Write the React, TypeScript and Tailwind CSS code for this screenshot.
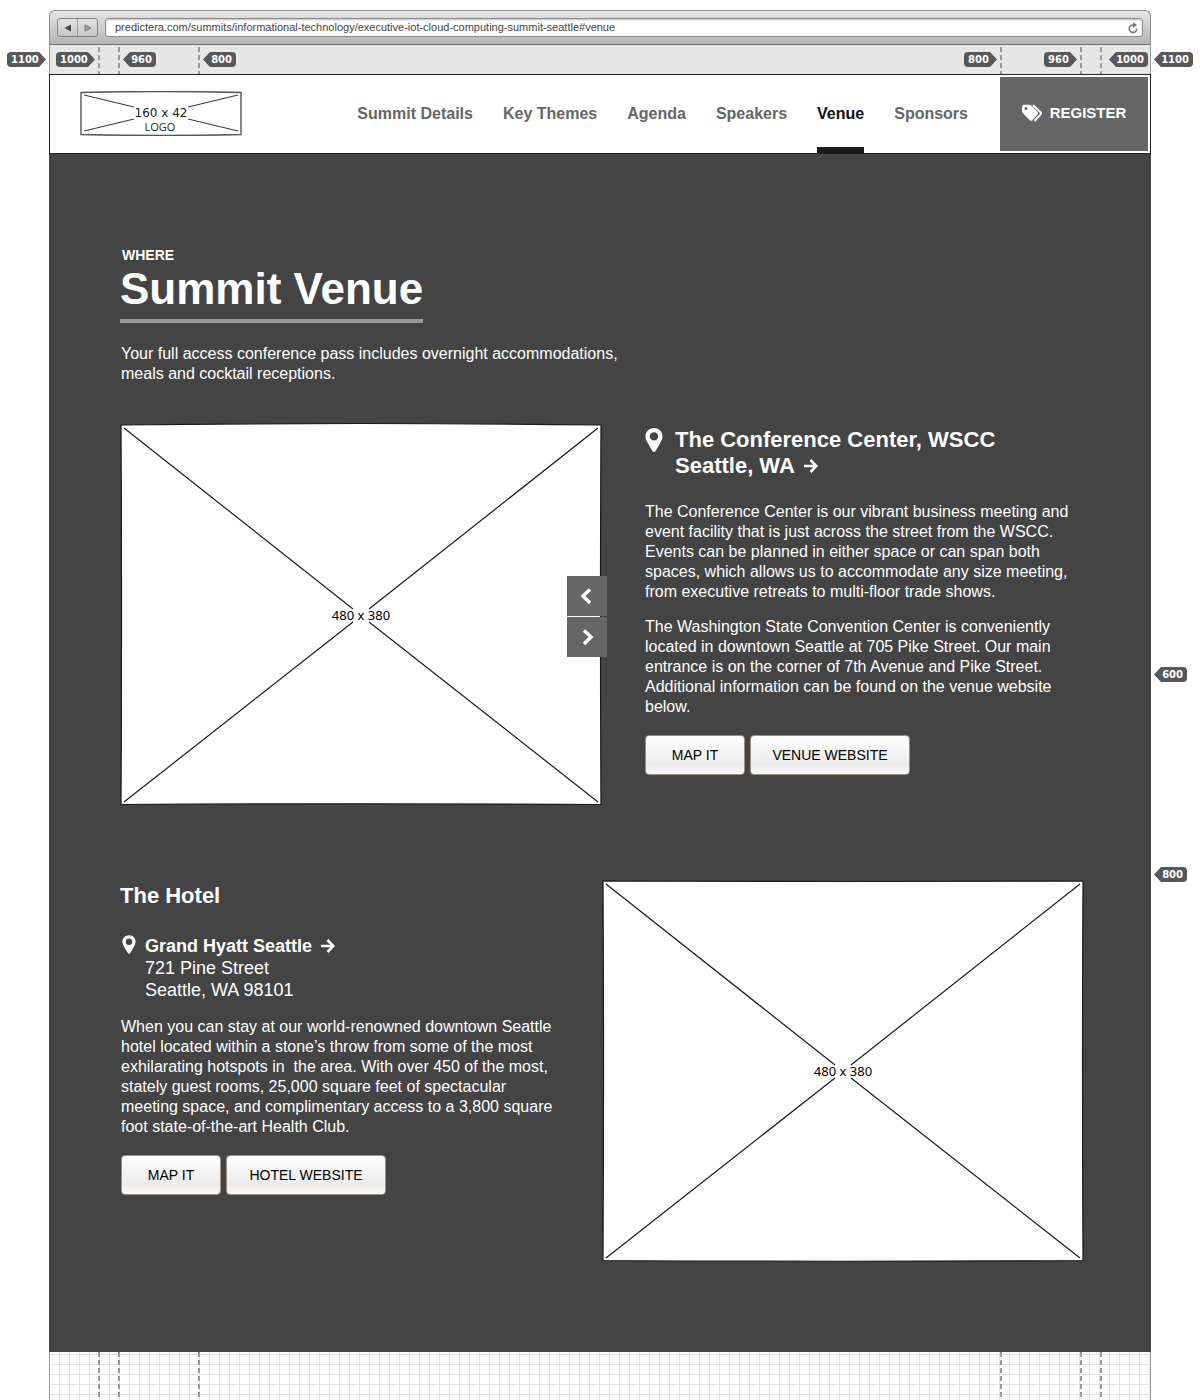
import type { ReactNode } from "react";

function Tag({ label, dir, className = "" }: { label: string; dir: "left" | "right"; className?: string }) {
  return (
    <span
      className={`flex h-[15px] shrink-0 items-center rounded-sm bg-[#58585a] font-['DejaVu_Sans'] text-[10px] leading-none font-bold text-white ${
        dir === "right"
          ? "pr-2.5 pl-1 [clip-path:polygon(0_0,calc(100%-7px)_0,100%_50%,calc(100%-7px)_100%,0_100%)]"
          : "justify-end pr-1 pl-2.5 [clip-path:polygon(7px_0,100%_0,100%_100%,7px_100%,0_50%)]"
      } ${label.length > 3 ? "w-[39px]" : "w-[33px]"} ${className}`}
    >
      {label}
    </span>
  );
}

function Guide({ className = "" }: { className?: string }) {
  return (
    <i
      className={`w-0.5 shrink-0 self-stretch bg-[repeating-linear-gradient(to_bottom,#999_0_5px,transparent_5px_8px)] ${className}`}
    />
  );
}

function Placeholder({ outline, children }: { outline: string; children?: ReactNode }) {
  return (
    <div className="relative w-[482px] max-w-full shrink-0">
      <svg
        viewBox="0 0 482 382"
        className="block w-full overflow-visible"
        fill="none"
        stroke="#1a1a1a"
        strokeWidth="1.2"
      >
        <path d={outline} fill="#fff" />
        <path d="M4 5L233 186M249 199L478 379M478 5L249 186M233 199L4 379" />
        <text
          x="241"
          y="197"
          textAnchor="middle"
          className="fill-black stroke-none font-['Noto_Sans',sans-serif] text-[13px]"
        >
          480 x 380
        </text>
      </svg>
      {children}
    </div>
  );
}

function Pin({ className }: { className: string }) {
  return (
    <svg viewBox="0 0 18 24" className={className} fill="#fff" aria-hidden="true">
      <path
        fillRule="evenodd"
        d="M9 0C4 0 .5 3.7.5 8.3c0 2.4.9 4.2 2 6.200L7.400 23c.7 1.200 2.500 1.200 3.200 0l4.900-8.500c1.100-2 2-3.800 2-6.200C17.500 3.700 14 0 9 0zM9 4.200a4.200 4.200 0 1 1 0 8.400a4.200 4.200 0 0 1 0-8.400z"
      />
    </svg>
  );
}

function Arrow() {
  return (
    <svg viewBox="0 0 14 14" className="size-3.5" fill="none" stroke="#fff" strokeWidth="2.600" aria-hidden="true">
      <path d="M0 7H12M6.500 1L12.300 7L6.500 13" />
    </svg>
  );
}

function Chevron({ d }: { d: string }) {
  return (
    <svg viewBox="0 0 40 40" className="size-10" fill="none" stroke="#fff" strokeWidth="3.500" aria-hidden="true">
      <path d={d} />
    </svg>
  );
}

function LinkButton({ children, wide }: { children: ReactNode; wide?: boolean }) {
  return (
    <button
      type="button"
      className={`h-10 rounded-[4px] border border-[#9c9184] bg-linear-to-b from-white via-[#ebebeb] via-75% to-[#fafafa] text-sm text-black ${
        wide ? "w-40" : "w-[100px]"
      }`}
    >
      {children}
    </button>
  );
}

const links = ["Summit Details", "Key Themes", "Agenda", "Speakers", "Venue", "Sponsors"];

export default function App() {
  return (
    <div className="grid min-h-screen grid-cols-[49px_1fr_49px] bg-white font-['Liberation_Sans',Arial,sans-serif]">
      <aside className="flex flex-col items-end pt-[52px] pr-[3px]">
        <Tag label="1100" dir="right" />
      </aside>

      <div className="flex flex-col pt-2.5">
        <div className="flex h-[35px] items-center gap-[7px] rounded-t-md border border-[#8f8f8f] border-b-[#6f6f6f] bg-linear-to-b from-[#e6e6e6] to-[#b4b4b4] px-[7px]">
          <div className="flex h-[19px] w-[41px] shrink-0 rounded-[3px] border border-[#858585] bg-linear-to-b from-[#e2e2e2] to-[#c6c6c6]">
            <button type="button" aria-label="Back" className="flex flex-1 items-center justify-center border-r border-[#999]">
              <svg viewBox="0 0 8 8" className="size-2">
                <path d="M7 .5V7.500L.5 4Z" fill="#444" />
              </svg>
            </button>
            <button type="button" aria-label="Forward" className="flex flex-1 items-center justify-center">
              <svg viewBox="0 0 8 8" className="size-2">
                <path d="M1 .8V7.200L7 4Z" fill="#999" stroke="#777" strokeWidth=".8" />
              </svg>
            </button>
          </div>
          <div className="flex h-[19px] flex-1 items-center rounded-[3px] border border-[#8b8b8b] bg-white pr-1 pl-[9px] shadow-[inset_0_1px_2px_#bbb]">
            <input
              aria-label="Address"
              readOnly
              value="predictera.com/summits/informational-technology/executive-iot-cloud-computing-summit-seattle#venue"
              className="min-w-0 flex-1 bg-transparent text-[11px] text-[#444] outline-none"
            />
            <button type="button" aria-label="Reload">
              <svg viewBox="0 0 10 12" className="h-3 w-2.5" fill="none" stroke="#777" strokeWidth="1.700">
                <path d="M6 3H5A3.700 3.700 0 1 0 8.700 6.700" />
                <path d="M5 0L9 3L5 6Z" fill="#777" stroke="none" />
              </svg>
            </button>
          </div>
        </div>

        <div className="flex h-[29px] justify-between border-x border-[#999] bg-[#e7e7e7] pt-0.5">
          <div className="flex pl-1.5">
            <Tag label="1000" dir="right" className="mt-[5px]" />
            <Guide className="ml-[3px]" />
            <Guide className="ml-[18px]" />
            <Tag label="960" dir="left" className="mt-[5px] ml-[3px]" />
            <Guide className="ml-[42px]" />
            <Tag label="800" dir="left" className="mt-[5px] ml-[3px]" />
          </div>
          <div className="flex pr-0.5">
            <Tag label="800" dir="right" className="mt-[5px]" />
            <Guide className="ml-[3px]" />
            <Tag label="960" dir="right" className="mt-[5px] ml-[42px]" />
            <Guide className="ml-[3px]" />
            <Guide className="ml-[18px]" />
            <Tag label="1000" dir="left" className="mt-[5px] ml-[7px]" />
          </div>
        </div>

        <header className="flex h-20 border border-[#222] bg-white">
          <a href="#top" aria-label="Logo" className="mt-4 ml-[30px] block w-[162px]">
            <svg viewBox="0 0 162 45" className="w-full" fill="none" stroke="#333">
              <path d="M1 1.500Q81-.5 161 1.500V43.500Q81 45.500 1 43.500Z" stroke="#555" strokeWidth="1.400" />
              <path d="M4 4L54 16M158 4L108 16M4 40L54 28M158 40L108 28" />
              <g textAnchor="middle" className="fill-[#222] stroke-none">
                <text x="81" y="26" className="font-['DejaVu_Sans',sans-serif] text-[12px]">
                  160 x 42
                </text>
                <text x="80" y="40" className="font-['Open_Sans',sans-serif] text-[11px]">
                  LOGO
                </text>
              </g>
            </svg>
          </a>
          <nav className="ml-auto flex gap-[30px] pr-8">
            {links.map((l) => (
              <a
                key={l}
                href={`#${l}`}
                className={`flex h-[78px] items-center border-t-[6px] border-b-[6px] border-t-transparent text-base font-bold ${
                  l === "Venue" ? "border-b-[#1b1b1b] text-[#111]" : "border-b-transparent text-[#666]"
                }`}
              >
                {l}
              </a>
            ))}
          </nav>
          <button
            type="button"
            className="mt-0.5 mr-0.5 flex h-[74px] w-[148px] items-center justify-center gap-[7px] bg-[#666] pb-0.5 text-[15px] font-bold text-white"
          >
            <svg viewBox="0 0 21 18" className="h-[18px] w-[21px]" aria-hidden="true">
              <path
                fillRule="evenodd"
                fill="#fff"
                d="M0 2.500Q0 .8 1.800.8H7.500Q8.500.8 9.300 1.600L15.500 8Q16.600 9.200 15.500 10.400L10.200 16.200Q9 17.400 7.800 16.200L1 9.300Q0 8.400 0 7.200ZM4 3A1.500 1.500 0 1 0 4 6A1.500 1.500 0 1 0 4 3Z"
              />
              <path d="M11 1.200L18.500 8.200Q19.600 9.300 18.500 10.400L12.500 17" fill="none" stroke="#fff" strokeWidth="2" />
            </svg>
            REGISTER
          </button>
        </header>

        <main className="bg-[#444] pt-[93px] pr-[67px] pb-[91px] pl-[71px] text-base leading-5 text-white">
          <p className="pl-0.5 text-sm leading-4 font-bold">WHERE</p>
          <h1 className="w-fit border-b-4 border-[#999] pt-px pb-[5px] text-[44px] leading-[50px] font-bold">
            Summit Venue
          </h1>
          <p className="mt-[21px] max-w-[520px] pl-px">
            Your full access conference pass includes overnight accommodations, meals and cocktail receptions.
          </p>

          <section className="mt-[39px] flex items-start gap-[43px]">
            <Placeholder outline="M1 2Q241-1 481 2Q480 191 481 381.500Q241 380 1 381.500Q2 191 1 2Z">
              <div className="absolute top-[153px] right-[-5px] flex flex-col gap-px">
                <button type="button" aria-label="Previous" className="bg-[#666]">
                  <Chevron d="M23 13.500L16 20L23 27" />
                </button>
                <button type="button" aria-label="Next" className="bg-[#666]">
                  <Chevron d="M17 13.500L24 20L17 27" />
                </button>
              </div>
            </Placeholder>
            <div className="max-w-[430px]">
              <div className="mt-1 flex gap-3">
                <Pin className="mt-px h-6 w-[18px] shrink-0" />
                <h2 className="text-[22px] leading-[26px] font-bold">
                  The Conference Center, WSCC
                  <span className="flex items-center gap-[9px]">
                    Seattle, WA <Arrow />
                  </span>
                </h2>
              </div>
              <p className="mt-[23px]">
                The Conference Center is our vibrant business meeting and event facility that is just across the street
                from the WSCC. Events can be planned in either space or can span both spaces, which allows us to
                accommodate any size meeting, from executive retreats to multi-floor trade shows.
              </p>
              <p className="mt-[15px]">
                The Washington State Convention Center is conveniently located in downtown Seattle at 705 Pike Street.
                Our main entrance is on the corner of 7th Avenue and Pike Street. Additional information can be found on
                the venue website below.
              </p>
              <div className="mt-[18px] flex gap-[5px]">
                <LinkButton>MAP IT</LinkButton>
                <LinkButton wide>VENUE WEBSITE</LinkButton>
              </div>
            </div>
          </section>

          <section className="mt-[74px] flex items-start justify-between">
            <div className="max-w-[440px]">
              <h2 className="mt-1 text-[22px] leading-[26px] font-bold">The Hotel</h2>
              <div className="mt-[26px] flex gap-[9px] pl-0.5 text-lg leading-[22px]">
                <Pin className="h-[19px] w-3.5 shrink-0" />
                <address className="not-italic">
                  <strong className="flex items-center gap-[9px]">
                    Grand Hyatt Seattle <Arrow />
                  </strong>
                  721 Pine Street
                  <br />
                  Seattle, WA 98101
                </address>
              </div>
              <p className="mt-4 pl-px">
                When you can stay at our world-renowned downtown Seattle hotel located within a stone’s throw from some
                of the most exhilarating hotspots in&nbsp; the area. With over 450 of the most, stately guest rooms,
                25,000 square feet of spectacular meeting space, and complimentary access to a 3,800 square foot
                state-of-the-art Health Club.
              </p>
              <div className="mt-[18px] flex gap-[5px] pl-px">
                <LinkButton>MAP IT</LinkButton>
                <LinkButton wide>HOTEL WEBSITE</LinkButton>
              </div>
            </div>
            <Placeholder outline="M1 2Q241 3 481 2Q480 191 481 381.500Q241 383 1 381.500Q2 191 1 2Z" />
          </section>
        </main>

        <div className="flex min-h-12 flex-1 justify-between border-x border-[#999] bg-[linear-gradient(to_right,transparent_9px,#e3e3e3_9px),linear-gradient(to_bottom,transparent_9px,#e3e3e3_9px)] bg-size-[10px_10px] bg-position-[0_3px]">
          <div className="flex pl-12">
            <Guide />
            <Guide className="ml-[18px]" />
            <Guide className="ml-[78px]" />
          </div>
          <div className="flex pr-12">
            <Guide />
            <Guide className="ml-[78px]" />
            <Guide className="ml-[18px]" />
          </div>
        </div>
      </div>

      <aside className="flex flex-col items-start pt-[52px] pl-[3px]">
        <Tag label="1100" dir="left" />
        <Tag label="600" dir="left" className="mt-[600px]" />
        <Tag label="800" dir="left" className="mt-[185px]" />
      </aside>
    </div>
  );
}
